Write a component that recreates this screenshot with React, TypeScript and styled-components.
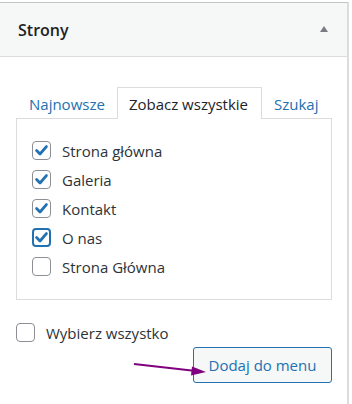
import * as React from 'react';
import styled, { createGlobalStyle, css } from 'styled-components';

const GlobalStyle = createGlobalStyle`
  html, body {
    margin: 0;
    padding: 0;
    background: #fff;
  }
  body {
    font-family: "Open Sans", "Noto Sans", "Liberation Sans", sans-serif;
    color: #2c3338;
    width: 352px;
    height: 404px;
    overflow: hidden;
  }
`;

const Panel = styled.div`
  position: relative;
  margin-top: 2px;
  width: 349px;
  height: 402px;
  border-top: 1px solid #c3c4c7;
  border-right: 2px solid #dcdcde;
  box-sizing: border-box;
  display: flex;
  flex-direction: column;
`;

const Header = styled.div`
  height: 54px;
  box-sizing: border-box;
  background: #f6f7f7;
  border-bottom: 1px solid #dcdcde;
  display: flex;
  align-items: center;
  justify-content: space-between;
  padding: 0 19px 0 18px;
`;

const Title = styled.h3`
  margin: 0;
  font-size: 16px;
  font-weight: 600;
  color: #1d2327;
`;

const Toggle = styled.span`
  width: 0;
  height: 0;
  border-left: 4.5px solid transparent;
  border-right: 4.5px solid transparent;
  border-bottom: 6px solid #787c82;
  margin-top: -1px;
`;

const Body = styled.div`
  padding: 30px 15px 0 16px;
  display: flex;
  flex-direction: column;
`;

const Tabs = styled.div`
  display: flex;
  align-items: stretch;
  height: 32px;
  padding-left: 1px;
  margin-bottom: -1px;
  position: relative;
  z-index: 1;
`;

interface TabProps {
  active?: boolean;
}
const Tab = styled.div<TabProps>`
  font-size: 15px;
  color: #2271b1;
  display: flex;
  align-items: center;
  padding: 0 11px;
  box-sizing: border-box;
  border: 1px solid transparent;
  border-bottom: none;
  ${(p) =>
    p.active &&
    css`
      color: #1d2327;
      background: #fff;
      border-color: #dcdcde;
      padding: 0 13px 0 11px;
    `};
`;

const Box = styled.div`
  border: 1px solid #dcdcde;
  height: 182px;
  box-sizing: border-box;
  padding: 17px 15px 0;
  display: flex;
  flex-direction: column;
`;

const Row = styled.label`
  display: flex;
  align-items: center;
  height: 29px;
  font-size: 15px;
  color: #2c3338;
  gap: 11px;
`;

interface CheckProps {
  checked?: boolean;
  focused?: boolean;
}
const CheckBox = styled.span<CheckProps>`
  width: 19px;
  height: 19px;
  box-sizing: border-box;
  border: 1px solid #8c8f94;
  border-radius: 4px;
  background: #fff;
  display: flex;
  align-items: center;
  justify-content: center;
  flex: 0 0 auto;
  ${(p) =>
    p.focused &&
    css`
      border: 2px solid #2271b1;
    `};
`;

const Check = ({ checked, focused }: CheckProps) => (
  <CheckBox checked={checked} focused={focused}>
    {checked && (
      <svg width="15" height="15" viewBox="0 0 15 15">
        <path d="M2.6 7.6 L6 11 L12.4 3.6" fill="none" stroke="#2271b1" strokeWidth="2.8" strokeLinecap="round" strokeLinejoin="round" />
      </svg>
    )}
  </CheckBox>
);

const SelectAll = styled(Row)`
  margin-top: 18px;
`;

const Actions = styled.div`
  display: flex;
  justify-content: flex-end;
`;

const Button = styled.button`
  width: 139px;
  height: 36px;
  box-sizing: border-box;
  border: 1px solid #2271b1;
  border-radius: 3px;
  background: #f6f7f7;
  color: #2271b1;
  font-family: inherit;
  font-size: 15px;
  padding: 0;
  cursor: pointer;
`;

const Arrow = styled.svg`
  position: absolute;
  left: 130px;
  top: 353px;
`;

const pages = [
  { name: 'Strona główna', checked: true },
  { name: 'Galeria', checked: true },
  { name: 'Kontakt', checked: true },
  { name: 'O nas', checked: true, focused: true },
  { name: 'Strona Główna', checked: false },
];

export default function App() {
  return (
    <>
      <GlobalStyle />
      <Panel>
        <Header>
          <Title>Strony</Title>
          <Toggle />
        </Header>
        <Body>
          <Tabs>
            <Tab>Najnowsze</Tab>
            <Tab active>Zobacz wszystkie</Tab>
            <Tab>Szukaj</Tab>
          </Tabs>
          <Box>
            {pages.map((p) => (
              <Row key={p.name}>
                <Check checked={p.checked} focused={p.focused} />
                {p.name}
              </Row>
            ))}
          </Box>
          <SelectAll>
            <Check />
            Wybierz wszystko
          </SelectAll>
          <Actions>
            <Button>Dodaj do menu</Button>
          </Actions>
        </Body>
        <Arrow width="80" height="24" viewBox="0 0 80 24">
          <line x1="4" y1="8" x2="66" y2="15" stroke="#800080" strokeWidth="2.2" />
          <path d="M76 16 L62 10.5 L61 19.5 Z" fill="#800080" />
        </Arrow>
      </Panel>
    </>
  );
}
